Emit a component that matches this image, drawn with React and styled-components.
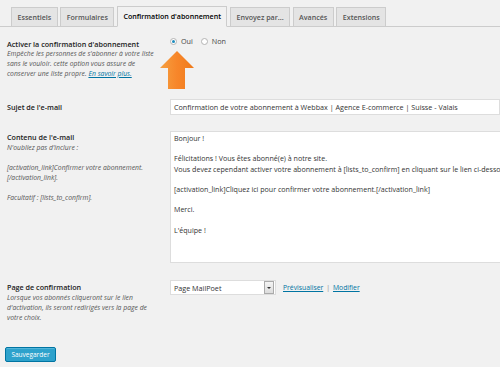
import React from 'react'
import styled, { createGlobalStyle } from 'styled-components';

const GlobalStyle = createGlobalStyle`
html, body {
  margin: 0;
  padding: 0;
  background: #f1f1f1;
  overflow: hidden;
}
body {
  font-family: "Open Sans", "DejaVu Sans", sans-serif;
  color: #222;
}
`;

const Page = styled.div`
position: relative;
width: 500px;
height: 367px;
overflow: hidden;
`;

const TabBar = styled.div`
display: flex;
align-items: flex-end;
gap: 2.5px;
padding: 6px 0 0 11px;
border-bottom: 1px solid #ccc;
`;

const Tab = styled.div`
height: 18px;
line-height: 18px;
padding: 0 5.5px;
border: 1px solid #ccc;
border-bottom: none;
margin-bottom: ${p => (p.$active ? '-1px' : '0')};
background: ${p => (p.$active ? '#f1f1f1' : '#e4e4e4')};
color: ${p => (p.$active ? '#000' : '#555')};
font-size: 7.1px;
font-weight: 600;
white-space: nowrap;
${p => p.$active && 'height: 19px; border-bottom: 1px solid #f1f1f1;'}
`;

const Form = styled.div`
padding-left: 7px;
`;

const Row = styled.div`
display: flex;
align-items: flex-start;
margin-top: ${p => p.$top}px;
`;

const Side = styled.div`
width: 163px;
flex-shrink: 0;
padding-top: ${p => p.$pad || 0}px;
`;

const Label = styled.div`
font-size: 7.2px;
font-weight: 600;
line-height: 10px;
color: #222;
margin-bottom: ${p => p.$gap || 0}px;
`;

const Desc = styled.div`
font-size: 6.8px;
font-style: italic;
line-height: 10px;
color: #555;
margin-bottom: ${p => p.$gap || 0}px;
white-space: nowrap;
`;

const Link = styled.a`
color: #0074a2;
text-decoration: underline;
`;

const Radios = styled.div`
display: flex;
align-items: center;
gap: 4px;
height: 8px;
margin-top: -2px;
font-size: 7.2px;
color: #444;
`;

const RadioDot = styled.span`
display: inline-block;
box-sizing: border-box;
width: 7px;
height: 7px;
border-radius: 50%;
border: 1px solid #b4b4b4;
background: #fff;
position: relative;
margin-left: ${p => p.$ml || 0}px;
&::after {
  content: '';
  display: ${p => (p.$checked ? 'block' : 'none')};
  position: absolute;
  left: 1px;
  top: 1px;
  width: 3px;
  height: 3px;
  border-radius: 50%;
  background: #1e8cbe;
}
`;

const Arrow = styled.svg`
position: absolute;
left: 159px;
top: 50px;
`;

const TextInput = styled.div`
box-sizing: border-box;
width: 360px;
height: 16px;
line-height: 14px;
padding: 0 3px;
background: #fff;
border: 1px solid #ddd;
font-size: 7.2px;
color: #333;
white-space: nowrap;
`;

const TextArea = styled.div`
box-sizing: border-box;
width: 420px;
height: 132px;
padding: 1px 3px;
background: #fff;
border: 1px solid #ddd;
font-size: 7.1px;
line-height: 10.2px;
color: #333;
white-space: pre;
`;

const Controls = styled.div`
display: flex;
align-items: center;
gap: 7px;
font-size: 6.8px;
color: #666;
`;

const Select = styled.div`
box-sizing: border-box;
display: flex;
align-items: center;
justify-content: space-between;
width: 106px;
height: 15px;
padding-left: 3px;
background: #fff;
border: 1px solid #ddd;
font-size: 7.2px;
color: #333;
`;

const SelectButton = styled.span`
display: flex;
align-items: center;
justify-content: center;
width: 10px;
height: 13px;
margin-right: 1px;
background: linear-gradient(#f4f4f4, #dcdcdc);
border: 1px solid #aaa;
box-sizing: border-box;
&::after {
  content: '';
  border-left: 2px solid transparent;
  border-right: 2px solid transparent;
  border-top: 2px solid #333;
}
`;

const Links = styled.span`
display: flex;
gap: 3px;
color: #888;
`;

const SaveButton = styled.button`
display: block;
margin: 24px 0 0 -2px;
height: 15px;
width: 51px;
padding: 0;
border: 1px solid #0074a2;
border-radius: 2px;
background: #2ea2cc;
color: #fff;
font-family: "Open Sans", sans-serif;
font-size: 6.5px;
box-shadow: inset 0 1px 0 rgba(120, 200, 230, 0.5);
`;

const mailBody = `Bonjour !

Félicitations ! Vous êtes abonné(e) à notre site.
Vous devez cependant activer votre abonnement à [lists_to_confirm] en cliquant sur le lien ci-dessous.

[activation_link]Cliquez ici pour confirmer votre abonnement.[/activation_link]

Merci.

L'équipe !`;

function App() {
    return (
        <Page>
            <GlobalStyle />
            <TabBar>
                <Tab>Essentiels</Tab>
                <Tab>Formulaires</Tab>
                <Tab $active>Confirmation d'abonnement</Tab>
                <Tab>Envoyez par...</Tab>
                <Tab>Avancés</Tab>
                <Tab>Extensions</Tab>
            </TabBar>

            <Form>
                <Row $top={12}>
                    <Side>
                        <Label>Activer la confirmation d'abonnement</Label>
                        <Desc>
                            Empêche les personnes de s'abonner à votre liste<br />
                            sans le vouloir. cette option vous assure de<br />
                            conserver une liste propre. <Link>En savoir plus.</Link>
                        </Desc>
                    </Side>
                    <Radios>
                        <RadioDot $checked />
                        <span>Oui</span>
                        <RadioDot $ml={4} />
                        <span>Non</span>
                    </Radios>
                </Row>

                <Row $top={20}>
                    <Side $pad={3}>
                        <Label>Sujet de l'e-mail</Label>
                    </Side>
                    <TextInput>Confirmation de votre abonnement à Webbax | Agence E-commerce | Suisse - Valais</TextInput>
                </Row>

                <Row $top={16}>
                    <Side $pad={1}>
                        <Label $gap={1}>Contenu de l'e-mail</Label>
                        <Desc $gap={10}>N'oubliez pas d'inclure :</Desc>
                        <Desc $gap={10}>[activation_link]Confirmer votre abonnement.<br />[/activation_link].</Desc>
                        <Desc>Facultatif : [lists_to_confirm].</Desc>
                    </Side>
                    <TextArea>{mailBody}</TextArea>
                </Row>

                <Row $top={17}>
                    <Side $pad={2}>
                        <Label $gap={1}>Page de confirmation</Label>
                        <Desc>
                            Lorsque vos abonnés cliqueront sur le lien<br />
                            d'activation, ils seront redirigés vers la page de<br />
                            votre choix.
                        </Desc>
                    </Side>
                    <Controls>
                        <Select>
                            Page MailPoet
                            <SelectButton />
                        </Select>
                        <Links>
                            <Link>Prévisualiser</Link>|<Link>Modifier</Link>
                        </Links>
                    </Controls>
                </Row>

                <SaveButton>Sauvegarder</SaveButton>
            </Form>

            <Arrow width="36" height="40" viewBox="0 0 36 40">
                <defs>
                    <linearGradient id="arrowFill" x1="0" y1="0" x2="1" y2="0">
                        <stop offset="0" stopColor="#f5a040" />
                        <stop offset="0.5" stopColor="#f7862a" />
                        <stop offset="1" stopColor="#ef7a1a" />
                    </linearGradient>
                </defs>
                <polygon points="18,1 35,18 26,18 26,39 9,39 9,18 1,18" fill="url(#arrowFill)" />
            </Arrow>
        </Page>
    )
}

export default App
